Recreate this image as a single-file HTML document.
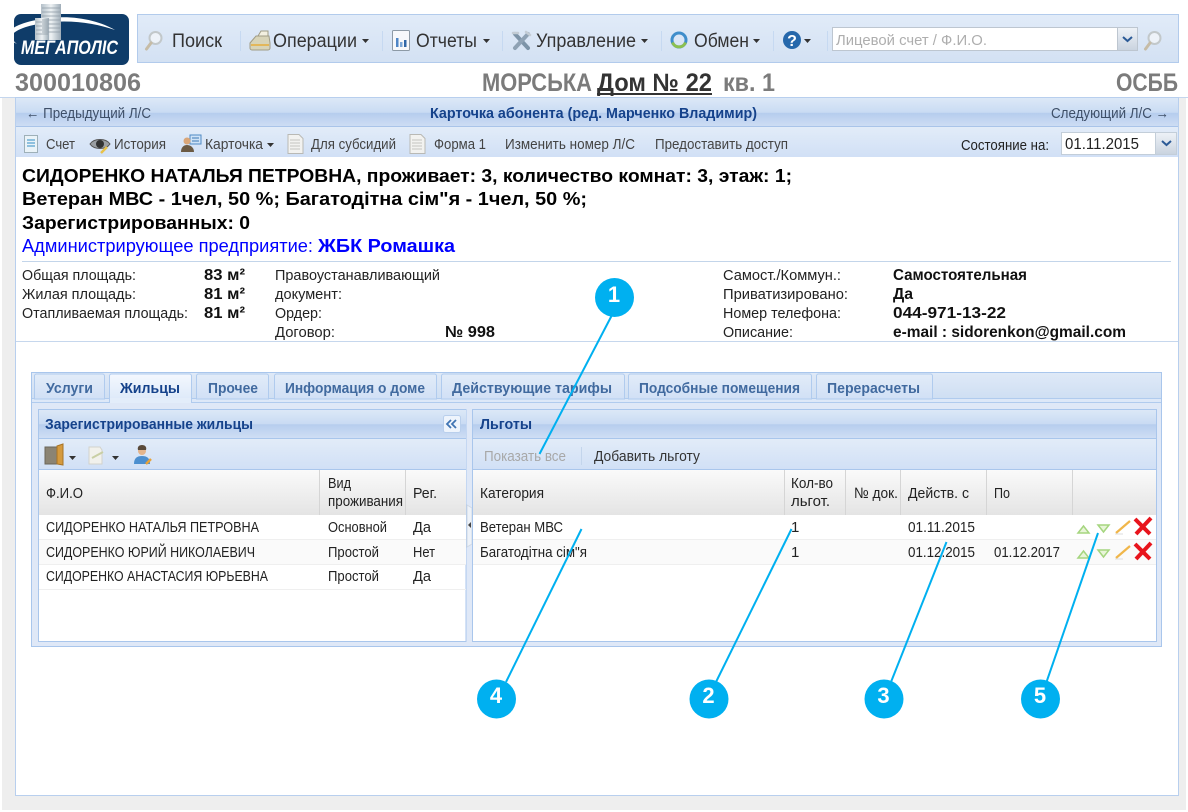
<!DOCTYPE html>
<html lang="ru"><head><meta charset="utf-8"><title>Карточка абонента</title>
<style>
html,body{margin:0;padding:0;background:#fff;width:1188px;height:812px;overflow:hidden}
svg{display:block;filter:blur(.35px)}
text{font-family:"Liberation Sans",sans-serif;font-size:15px;fill:#222}
.b{font-weight:bold;fill:#111;font-size:16px}
.tb{font-size:19px;fill:#333}
.tab{font-weight:bold;fill:#416a9f;font-size:14.500px}
.ttl{font-weight:bold;fill:#15428b;font-size:14.500px}
.h{font-weight:bold;font-size:18px;fill:#000}
.big{font-weight:bold;font-size:25px;fill:#7b7b7b}
.tl{fill:#444}
.n{font-size:22px;font-weight:bold;fill:#fff;text-anchor:middle}
</style></head><body>
<svg width="1188" height="812" viewBox="0 0 1188 812" xmlns="http://www.w3.org/2000/svg">
<defs>
<linearGradient id="g1" x1="0" y1="0" x2="0" y2="1"><stop offset="0" stop-color="#e1ebf8"/><stop offset="1" stop-color="#d3e1f3"/></linearGradient>
<linearGradient id="g2" x1="0" y1="0" x2="0" y2="1"><stop offset="0" stop-color="#dce8f7"/><stop offset=".5" stop-color="#c9dbf3"/><stop offset=".52" stop-color="#b6cdee"/><stop offset="1" stop-color="#cfdef4"/></linearGradient>
<linearGradient id="g3" x1="0" y1="0" x2="0" y2="1"><stop offset="0" stop-color="#dfe9f7"/><stop offset="1" stop-color="#cfdff3"/></linearGradient>
<linearGradient id="g4" x1="0" y1="0" x2="0" y2="1"><stop offset="0" stop-color="#fafafa"/><stop offset="1" stop-color="#e4e4e4"/></linearGradient>
<linearGradient id="g5" x1="0" y1="0" x2="0" y2="1"><stop offset="0" stop-color="#e2ecf8"/><stop offset="1" stop-color="#d1e0f6"/></linearGradient>
<linearGradient id="g6" x1="0" y1="0" x2="0" y2="1"><stop offset="0" stop-color="#f4f8fe"/><stop offset="1" stop-color="#dbe8f9"/></linearGradient>
<linearGradient id="g7" x1="0" y1="0" x2="0" y2="1"><stop offset="0" stop-color="#eef2f7"/><stop offset="1" stop-color="#c9d3df"/></linearGradient>
<linearGradient id="bld" x1="0" y1="0" x2="1" y2="0"><stop offset="0" stop-color="#b4c0c9"/><stop offset=".5" stop-color="#eef2f4"/><stop offset="1" stop-color="#9fadb8"/></linearGradient>
<g id="doc"><path d="M1 .5h11l4 4v15H1z" fill="#f2f2f0" stroke="#b9b9b5"/><path d="M3 6h10M3 9h10M3 12h10M3 15h10" stroke="#c4c4c0"/></g>
<g id="up"><path d="M0 7L5.500 0L11 7z" fill="#e8f5d8" stroke="#a5d57f" stroke-width="1.500"/></g>
<g id="down"><path d="M0 0L5.500 7L11 0z" fill="#e8f5d8" stroke="#a5d57f" stroke-width="1.500"/></g>
<g id="pen"><path d="M1 13L15 1" stroke="#f0b64a" stroke-width="2.200"/><path d="M0 14h8" stroke="#ddd" stroke-width="1"/></g>
<g id="x"><path d="M2 2L17 17M18 1L3 17" stroke="#e8141c" stroke-width="4"/></g>
<g id="mag"><circle cx="10.500" cy="7" r="6" fill="#eef3f9" stroke="#c2c8ca" stroke-width="2"/><path d="M6 12L1.500 18" stroke="#c6bca6" stroke-width="3" stroke-linecap="round"/></g>
</defs>

<!-- page background -->
<rect x="2" y="97" width="1184" height="713" fill="#eeeeee"/>

<!-- logo -->
<rect x="14" y="14" width="115" height="51" rx="7" fill="#0f3c69"/>
<path d="M17 44C9 40 5 36 7 33C14 25 30 20 50 18C75 15 100 21 115 30C98 24 75 20 52 22C34 24 18 28 13 34C11 37 13 41 17 44z" fill="#fff"/>
<rect x="41" y="4" width="20" height="36" fill="url(#bld)"/>
<rect x="35" y="18" width="14" height="22" fill="url(#bld)"/>
<path d="M42 8h18M42 12h18M42 16h18M42 20h18M42 24h18M42 28h18M42 32h18M36 22h12M36 26h12M36 30h12M36 34h12" stroke="#8d9ba5" stroke-width=".8"/>
<text x="21" y="54" textLength="97" lengthAdjust="spacingAndGlyphs" style="font-size:19px;font-weight:bold;font-style:italic;fill:#fff;font-kerning:none">МЕГАПОЛІС</text>

<!-- main toolbar -->
<rect x="137.500" y="14.500" width="1041" height="48" fill="url(#g1)" stroke="#b2cbec"/>
<path d="M240.500 31v20M382.500 31v20M502.500 31v20M661.500 31v20M773.500 31v20M827.500 31v20" stroke="#c6d9f1"/>
<use href="#mag" x="145" y="31"/>
<text class="tb" x="172" y="47" textLength="50" lengthAdjust="spacingAndGlyphs">Поиск</text>
<g><path d="M250 43l6-7h13l1 7v5a2 2 0 0 1-2 2h-16a2 2 0 0 1-2-2z" fill="#d8d4b8" stroke="#a09c86"/><path d="M258 36l3-5h7v5z" fill="#f2efe0" stroke="#a09c86"/><path d="M251 45h18" stroke="#e3b75a" stroke-width="2"/></g>
<text class="tb" x="273" y="47" textLength="84" lengthAdjust="spacingAndGlyphs">Операции</text>
<path d="M362 39h7l-3.500 4z" fill="#333"/>
<g><rect x="392.500" y="30.500" width="17" height="20" rx="1" fill="#f6f8fb" stroke="#8d9aa6"/><path d="M396 38h2.500v9H396z" fill="#4f86c6"/><path d="M400 42h2.500v5H400z" fill="#7aa7d8"/><path d="M404 40h2.500v7H404z" fill="#2f67a8"/></g>
<text class="tb" x="416" y="47" textLength="61" lengthAdjust="spacingAndGlyphs">Отчеты</text>
<path d="M483 39h7l-3.500 4z" fill="#333"/>
<g fill="none" stroke-linecap="round"><path d="M515 34L528 48" stroke="#7d94a8" stroke-width="4"/><path d="M528 34L515 48" stroke="#8fa2b4" stroke-width="4"/><path d="M513 33l5 0M526 32l4 3" stroke="#c3ccd4" stroke-width="2.500"/></g>
<text class="tb" x="536" y="47" textLength="100" lengthAdjust="spacingAndGlyphs">Управление</text>
<path d="M641 39h7l-3.500 4z" fill="#333"/>
<circle cx="679" cy="40" r="7" fill="none" stroke="#3f8ecb" stroke-width="3"/>
<path d="M672.500 42.500A7 7 0 0 0 685.500 42.500" fill="none" stroke="#8cc04f" stroke-width="3"/>
<text class="tb" x="694" y="47" textLength="55" lengthAdjust="spacingAndGlyphs">Обмен</text>
<path d="M753 39h7l-3.500 4z" fill="#333"/>
<circle cx="792" cy="40" r="9" fill="#2668ab"/>
<text x="792" y="46" text-anchor="middle" style="font-size:16px;font-weight:bold;fill:#fff">?</text>
<path d="M804 39h7l-3.500 4z" fill="#333"/>
<rect x="832.500" y="27.500" width="285" height="23" fill="#fff" stroke="#bdc6d0"/>
<text x="836" y="45" textLength="151" lengthAdjust="spacingAndGlyphs" style="fill:#aeaeae">Лицевой счет / Ф.И.О.</text>
<rect x="1117.500" y="27.500" width="20" height="23" fill="url(#g7)" stroke="#bdc6d0"/>
<path d="M1123 37l4.500 4 4.500-4" fill="none" stroke="#2b5a96" stroke-width="2"/>
<use href="#mag" x="1144" y="31"/>

<!-- title row -->
<text class="big" x="15" y="91" textLength="126" lengthAdjust="spacingAndGlyphs">300010806</text>
<text class="big" x="482" y="91" textLength="110" lengthAdjust="spacingAndGlyphs">МОРСЬКА</text>
<text class="big" x="597" y="91" textLength="115" lengthAdjust="spacingAndGlyphs" style="fill:#333">Дом № 22</text>
<rect x="597" y="93" width="115" height="2" fill="#333"/>
<text class="big" x="723" y="91" textLength="52" lengthAdjust="spacingAndGlyphs">кв. 1</text>
<text class="big" x="1116" y="91" textLength="62" lengthAdjust="spacingAndGlyphs">ОСББ</text>
<rect x="0" y="97" width="1188" height="1" fill="#c4d6ee"/>

<!-- main panel -->
<rect x="15.500" y="97.500" width="1163" height="698" fill="#fff" stroke="#b8cfee"/>
<rect x="16" y="98" width="1162" height="29" fill="url(#g2)"/>
<rect x="16" y="126" width="1162" height="1" fill="#a9c4e9"/>
<text x="26" y="118" textLength="125" lengthAdjust="spacingAndGlyphs" style="fill:#3e4f68">← Предыдущий Л/С</text>
<text class="ttl" x="430" y="118" textLength="327" lengthAdjust="spacingAndGlyphs">Карточка абонента (ред. Марченко Владимир)</text>
<text x="1051" y="118" textLength="118" lengthAdjust="spacingAndGlyphs" style="fill:#3e4f68">Следующий Л/С →</text>

<!-- panel toolbar -->
<rect x="16" y="127" width="1162" height="30" fill="url(#g5)"/>
<g><rect x="24.500" y="135.500" width="13" height="17" fill="#eaf3f8" stroke="#9eb0b8"/><path d="M27 140h8M27 143h8M27 146h8" stroke="#6fb0d6" stroke-width="1.500"/></g>
<text class="tl" x="46" y="149" textLength="29" lengthAdjust="spacingAndGlyphs">Счет</text>
<g><path d="M90 144c4-6 16-6 20 0c-4 6-16 6-20 0z" fill="#9a9ea2" stroke="#555"/><circle cx="100" cy="144" r="4" fill="#333"/><path d="M101 153l6-6" stroke="#e8c24a" stroke-width="2.500"/></g>
<text class="tl" x="114" y="149" textLength="52" lengthAdjust="spacingAndGlyphs">История</text>
<g><rect x="190" y="135" width="11" height="9" fill="#cfe3f7" stroke="#4f8ac4"/><circle cx="187" cy="141" r="3.500" fill="#d9a679"/><path d="M181 152c0-5 3-7 6-7s7 2 7 7z" fill="#6b5a44"/><path d="M192 138h7M192 141h7" stroke="#3d78b5"/></g>
<text class="tl" x="205" y="149" textLength="58" lengthAdjust="spacingAndGlyphs">Карточка</text>
<path d="M267 143h7l-3.500 4z" fill="#333"/>
<use href="#doc" x="287" y="134"/>
<text class="tl" x="311" y="149" textLength="85" lengthAdjust="spacingAndGlyphs">Для субсидий</text>
<use href="#doc" x="409" y="134"/>
<text class="tl" x="434" y="149" textLength="52" lengthAdjust="spacingAndGlyphs">Форма 1</text>
<text class="tl" x="505" y="149" textLength="130" lengthAdjust="spacingAndGlyphs">Изменить номер Л/С</text>
<text class="tl" x="655" y="149" textLength="133" lengthAdjust="spacingAndGlyphs">Предоставить доступ</text>
<text x="961" y="150" textLength="88" lengthAdjust="spacingAndGlyphs">Состояние на:</text>
<rect x="1061.500" y="132.500" width="94" height="22" fill="#fff" stroke="#c3ced9"/>
<text x="1065" y="149" textLength="74" lengthAdjust="spacingAndGlyphs" style="font-size:16px">01.11.2015</text>
<rect x="1155.500" y="132.500" width="21" height="22" fill="url(#g7)" stroke="#c3ced9"/>
<path d="M1162 141l4.500 4 4.500-4" fill="none" stroke="#2b5a96" stroke-width="2"/>

<!-- heading info -->
<text class="h" x="22" y="182" textLength="770" lengthAdjust="spacingAndGlyphs">СИДОРЕНКО НАТАЛЬЯ ПЕТРОВНА, проживает: 3, количество комнат: 3, этаж: 1;</text>
<text class="h" x="22" y="205" textLength="565" lengthAdjust="spacingAndGlyphs">Ветеран МВС - 1чел, 50 %; Багатодітна сім"я - 1чел, 50 %;</text>
<text class="h" x="22" y="229" textLength="228" lengthAdjust="spacingAndGlyphs">Зарегистрированных: 0</text>
<text x="22" y="252" textLength="291" lengthAdjust="spacingAndGlyphs" style="font-size:18px;fill:#0000ff">Администрирующее предприятие:</text>
<text x="318" y="252" textLength="137" lengthAdjust="spacingAndGlyphs" style="font-size:18px;font-weight:bold;fill:#0000ff">ЖБК Ромашка</text>
<rect x="22" y="261" width="1149" height="1" fill="#c3d5ea"/>

<text x="22" y="280" textLength="114" lengthAdjust="spacingAndGlyphs">Общая площадь:</text>
<text x="22" y="299" textLength="114" lengthAdjust="spacingAndGlyphs">Жилая площадь:</text>
<text x="22" y="318" textLength="166" lengthAdjust="spacingAndGlyphs">Отапливаемая площадь:</text>
<text class="b" x="204" y="280" textLength="41" lengthAdjust="spacingAndGlyphs">83 м²</text>
<text class="b" x="204" y="299" textLength="41" lengthAdjust="spacingAndGlyphs">81 м²</text>
<text class="b" x="204" y="318" textLength="41" lengthAdjust="spacingAndGlyphs">81 м²</text>
<text x="275" y="280" textLength="165" lengthAdjust="spacingAndGlyphs">Правоустанавливающий</text>
<text x="275" y="299" textLength="67" lengthAdjust="spacingAndGlyphs">документ:</text>
<text x="275" y="318" textLength="47" lengthAdjust="spacingAndGlyphs">Ордер:</text>
<text x="275" y="337" textLength="60" lengthAdjust="spacingAndGlyphs">Договор:</text>
<text class="b" x="445" y="337" textLength="50" lengthAdjust="spacingAndGlyphs">№ 998</text>
<text x="723" y="280" textLength="118" lengthAdjust="spacingAndGlyphs">Самост./Коммун.:</text>
<text x="723" y="299" textLength="125" lengthAdjust="spacingAndGlyphs">Приватизировано:</text>
<text x="723" y="318" textLength="118" lengthAdjust="spacingAndGlyphs">Номер телефона:</text>
<text x="723" y="337" textLength="70" lengthAdjust="spacingAndGlyphs">Описание:</text>
<text class="b" x="893" y="280" textLength="134" lengthAdjust="spacingAndGlyphs">Самостоятельная</text>
<text class="b" x="893" y="299" textLength="20" lengthAdjust="spacingAndGlyphs">Да</text>
<text class="b" x="893" y="318" textLength="113" lengthAdjust="spacingAndGlyphs">044-971-13-22</text>
<text class="b" x="893" y="337" textLength="233" lengthAdjust="spacingAndGlyphs">e-mail : sidorenkon@gmail.com</text>
<rect x="16" y="341" width="1162" height="1" fill="#c6d7ed"/>

<!-- tabs container -->
<rect x="31.500" y="372.500" width="1130" height="274" fill="#dfe8f7" stroke="#a9c6ec"/>
<rect x="32" y="373" width="1129" height="25" fill="url(#g3)"/>
<rect x="32" y="402" width="1129" height="1" fill="#b0cbee"/>
<rect x="32" y="398" width="1129" height="4" fill="#dde8f8"/>
<rect x="32" y="398" width="1129" height="1" fill="#b0cbee"/>
<g fill="url(#g5)" stroke="#b0cbee">
<path d="M34.500 399v-23a2 2 0 0 1 2-2h66a2 2 0 0 1 2 2v23z"/>
<path d="M196.500 399v-23a2 2 0 0 1 2-2h68a2 2 0 0 1 2 2v23z"/>
<path d="M274.500 399v-23a2 2 0 0 1 2-2h158a2 2 0 0 1 2 2v23z"/>
<path d="M441.500 399v-23a2 2 0 0 1 2-2h179a2 2 0 0 1 2 2v23z"/>
<path d="M628.500 399v-23a2 2 0 0 1 2-2h179a2 2 0 0 1 2 2v23z"/>
<path d="M816.500 399v-23a2 2 0 0 1 2-2h112a2 2 0 0 1 2 2v23z"/>
</g>
<path d="M109.500 402v-26a2 2 0 0 1 2-2h78a2 2 0 0 1 2 2v26z" fill="url(#g6)" stroke="#b0cbee"/>
<rect x="110" y="398" width="81" height="5" fill="#e3edfa"/>
<text class="tab" x="46" y="393" textLength="47" lengthAdjust="spacingAndGlyphs">Услуги</text>
<text class="ttl" x="120" y="393" textLength="60" lengthAdjust="spacingAndGlyphs">Жильцы</text>
<text class="tab" x="208" y="393" textLength="50" lengthAdjust="spacingAndGlyphs">Прочее</text>
<text class="tab" x="285" y="393" textLength="140" lengthAdjust="spacingAndGlyphs">Информация о доме</text>
<text class="tab" x="452" y="393" textLength="160" lengthAdjust="spacingAndGlyphs">Действующие тарифы</text>
<text class="tab" x="639" y="393" textLength="161" lengthAdjust="spacingAndGlyphs">Подсобные помещения</text>
<text class="tab" x="827" y="393" textLength="93" lengthAdjust="spacingAndGlyphs">Перерасчеты</text>

<!-- left panel -->
<rect x="38.500" y="409.500" width="427.500" height="232" fill="#fff" stroke="#a9c6ec"/>
<rect x="39" y="410" width="427" height="28" fill="url(#g2)"/>
<rect x="39" y="438" width="427" height="1" fill="#a9c6ec"/>
<text class="ttl" x="45" y="429" textLength="208" lengthAdjust="spacingAndGlyphs">Зарегистрированные жильцы</text>
<rect x="443.500" y="415.500" width="17" height="17" rx="2" fill="#eef4fc" stroke="#b9cfec"/>
<path d="M451 420l-4 4 4 4M456 420l-4 4 4 4" fill="none" stroke="#3f74b3" stroke-width="1.800"/>
<rect x="39" y="439" width="427" height="30" fill="url(#g5)"/>
<rect x="39" y="469" width="427" height="1" fill="#a9c6ec"/>
<g><rect x="45" y="447" width="12" height="17" fill="#8b8474" stroke="#6b665a"/><path d="M57 446l6-2v21l-6-1z" fill="#d59a3e" stroke="#a87426"/></g>
<path d="M69 456h7l-3.500 4z" fill="#333"/>
<g><path d="M89 447h11l2 3v14H89z" fill="#f1f1ec" stroke="#d2d2cc"/><path d="M92 458l11-6" stroke="#c9cfa5" stroke-width="2"/></g>
<path d="M112 456h7l-3.500 4z" fill="#333"/>
<g><circle cx="142" cy="451" r="4" fill="#e3b58d"/><path d="M142 445c3 0 5 2 4 5h-8c-1-3 1-5 4-5z" fill="#5a4a3a"/><path d="M134 464c0-6 3-8 8-8s8 2 8 8z" fill="#4c8fcf"/><path d="M146 464l5-5" stroke="#e8a33a" stroke-width="2.500"/></g>
<rect x="39" y="470" width="427" height="45" fill="url(#g4)"/>
<path d="M319.500 470v45M405.500 470v45" stroke="#d5d5d5"/>
<text x="46" y="498" textLength="37" lengthAdjust="spacingAndGlyphs">Ф.И.О</text>
<text x="328" y="488" textLength="23" lengthAdjust="spacingAndGlyphs">Вид</text>
<text x="328" y="506" textLength="75" lengthAdjust="spacingAndGlyphs">проживания</text>
<text x="413" y="498" textLength="24" lengthAdjust="spacingAndGlyphs">Рег.</text>
<rect x="39" y="515" width="427" height="25" fill="#fff"/>
<rect x="39" y="540" width="427" height="25" fill="#fafafa"/>
<path d="M39 539.500h427M39 564.500h427M39 589.500h427" stroke="#efefef"/>
<text x="46" y="532" textLength="213" lengthAdjust="spacingAndGlyphs">СИДОРЕНКО НАТАЛЬЯ ПЕТРОВНА</text>
<text x="328" y="532" textLength="59" lengthAdjust="spacingAndGlyphs">Основной</text>
<text x="413" y="532" textLength="18" lengthAdjust="spacingAndGlyphs">Да</text>
<text x="46" y="557" textLength="209" lengthAdjust="spacingAndGlyphs">СИДОРЕНКО ЮРИЙ НИКОЛАЕВИЧ</text>
<text x="328" y="557" textLength="51" lengthAdjust="spacingAndGlyphs">Простой</text>
<text x="413" y="557" textLength="22" lengthAdjust="spacingAndGlyphs">Нет</text>
<text x="46" y="581" textLength="222" lengthAdjust="spacingAndGlyphs">СИДОРЕНКО АНАСТАСИЯ ЮРЬЕВНА</text>
<text x="328" y="581" textLength="51" lengthAdjust="spacingAndGlyphs">Простой</text>
<text x="413" y="581" textLength="18" lengthAdjust="spacingAndGlyphs">Да</text>

<!-- splitter -->
<path d="M467 505l5 3v36l-5 3z" fill="#edf2f9" stroke="#cfd8e4"/>
<path d="M471 522v6l-3-3z" fill="#444"/>

<!-- right panel -->
<rect x="472.500" y="409.500" width="684" height="232" fill="#fff" stroke="#a9c6ec"/>
<rect x="473" y="410" width="683" height="28" fill="url(#g2)"/>
<rect x="473" y="438" width="683" height="1" fill="#a9c6ec"/>
<text class="ttl" x="480" y="429" textLength="52" lengthAdjust="spacingAndGlyphs">Льготы</text>
<rect x="473" y="439" width="683" height="30" fill="url(#g5)"/>
<rect x="473" y="469" width="683" height="1" fill="#a9c6ec"/>
<text x="484" y="461" textLength="82" lengthAdjust="spacingAndGlyphs" style="fill:#a8a8a8">Показать все</text>
<path d="M581.500 447v18" stroke="#c3d5ec"/>
<text x="594" y="461" textLength="106" lengthAdjust="spacingAndGlyphs" style="fill:#333">Добавить льготу</text>
<rect x="473" y="470" width="683" height="45" fill="url(#g4)"/>
<path d="M784.500 470v45M845.500 470v45M900.500 470v45M986.500 470v45M1072.500 470v45" stroke="#d5d5d5"/>
<text x="480" y="498" textLength="64" lengthAdjust="spacingAndGlyphs">Категория</text>
<text x="791" y="488" textLength="42" lengthAdjust="spacingAndGlyphs">Кол-во</text>
<text x="791" y="506" textLength="39" lengthAdjust="spacingAndGlyphs">льгот.</text>
<text x="854" y="498" textLength="44" lengthAdjust="spacingAndGlyphs">№ док.</text>
<text x="908" y="498" textLength="61" lengthAdjust="spacingAndGlyphs">Действ. с</text>
<text x="994" y="498" textLength="16" lengthAdjust="spacingAndGlyphs">По</text>
<rect x="473" y="540" width="683" height="25" fill="#fafafa"/>
<path d="M473 539.500h683M473 564.500h683" stroke="#efefef"/>
<text x="480" y="532" textLength="83" lengthAdjust="spacingAndGlyphs">Ветеран МВС</text>
<text x="791" y="532">1</text>
<text x="908" y="532" textLength="67" lengthAdjust="spacingAndGlyphs">01.11.2015</text>
<text x="480" y="557" textLength="107" lengthAdjust="spacingAndGlyphs">Багатодітна сім"я</text>
<text x="791" y="557">1</text>
<text x="908" y="557" textLength="67" lengthAdjust="spacingAndGlyphs">01.12.2015</text>
<text x="994" y="557" textLength="66" lengthAdjust="spacingAndGlyphs">01.12.2017</text>
<use href="#up" x="1078" y="526"/><use href="#down" x="1098" y="525"/><use href="#pen" x="1115" y="520"/><use href="#x" x="1133" y="517"/>
<use href="#up" x="1078" y="551"/><use href="#down" x="1098" y="550"/><use href="#pen" x="1115" y="545"/><use href="#x" x="1133" y="542"/>

<!-- callouts -->
<g stroke="#00b0f0" stroke-width="2" fill="none">
<path d="M612 315L539.500 454"/>
<path d="M506 682L581.500 529"/>
<path d="M716 682L791.500 529"/>
<path d="M891 682L946.500 542"/>
<path d="M1046.500 682L1098 533"/>
</g>
<g fill="#00b0f0">
<circle cx="614.500" cy="297.500" r="19.500"/>
<circle cx="496.500" cy="699" r="19.500"/>
<circle cx="709" cy="699" r="19.500"/>
<circle cx="884" cy="699" r="19.500"/>
<circle cx="1040.500" cy="699" r="19.500"/>
</g>
<text class="n" x="614" y="302">1</text>
<text class="n" x="496" y="703">4</text>
<text class="n" x="708.500" y="703">2</text>
<text class="n" x="883.500" y="703">3</text>
<text class="n" x="1040" y="703">5</text>
</svg>
</body></html>
